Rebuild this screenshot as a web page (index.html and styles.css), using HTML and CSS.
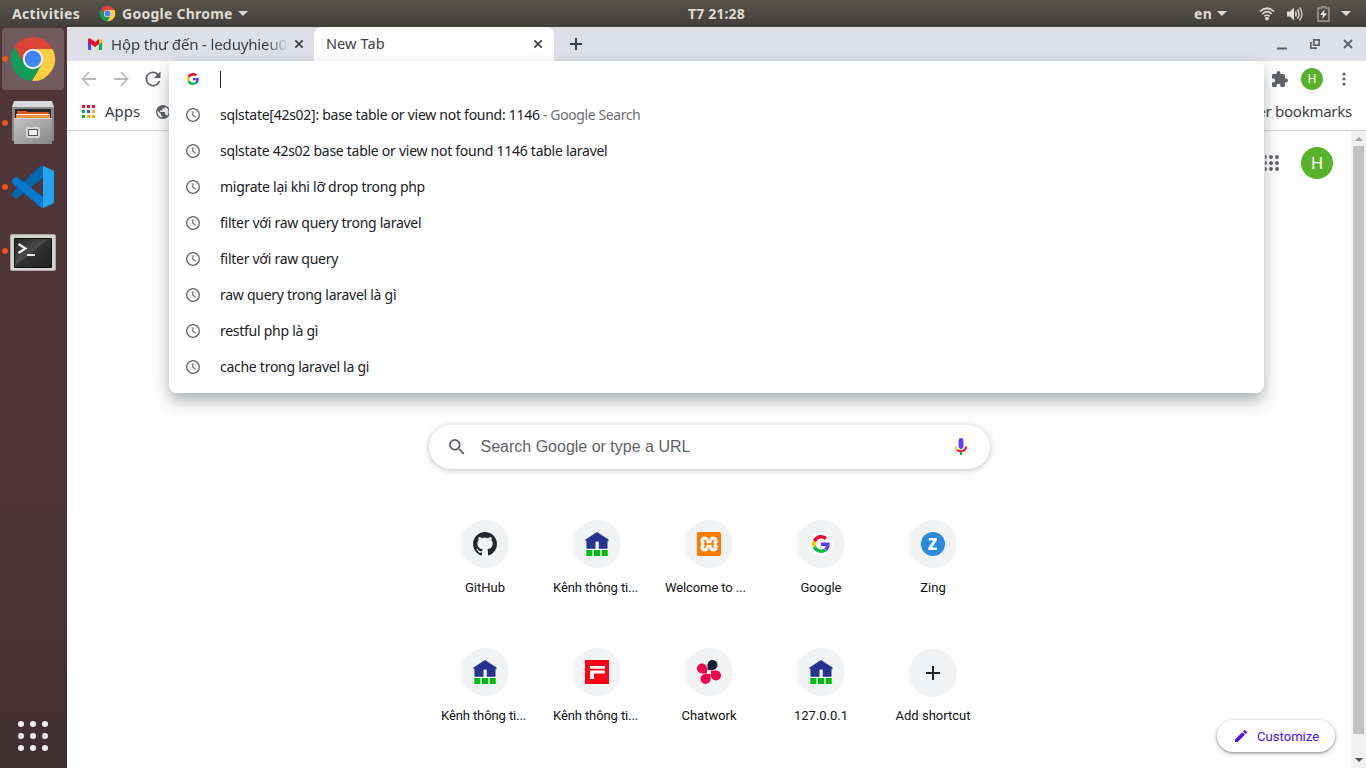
FILE: index.html
```html
<!DOCTYPE html>
<html lang="vi">
<head>
<meta charset="utf-8">
<title>New Tab</title>
<link rel="stylesheet" href="styles.css">
</head>
<body>
<svg class="defs" width="0" height="0">
  <symbol id="chrome" viewBox="0 0 48 48">
    <path fill="#db4437" d="M5.5 12A22 22 0 0 1 43.6 14H24L15.3 29Z"/>
    <path fill="#ffcd40" d="M43.6 14A22 22 0 0 1 22.9 46L32.7 29 24 14Z"/>
    <path fill="#0f9d58" d="M22.9 46A22 22 0 0 1 5.5 12L15.3 29H32.7Z"/>
    <circle cx="24" cy="24" r="10.2" fill="#f1f1f1"/><circle cx="24" cy="24" r="8.2" fill="#4285f4"/>
  </symbol>
  <symbol id="google" viewBox="0 0 48 48">
    <path fill="#f5002b" d="M24 9.5c3.54 0 6.71 1.22 9.21 3.6l6.85-6.85C35.9 2.38 30.47 0 24 0 14.62 0 6.51 5.38 2.56 13.22l7.98 6.19C12.43 13.72 17.74 9.5 24 9.5z"/>
    <path fill="#5a3fff" d="M46.98 24.55c0-1.57-.15-3.09-.38-4.55H24v9.02h12.94c-.58 2.96-2.26 5.48-4.78 7.18l7.73 6c4.51-4.18 7.09-10.36 7.09-17.65z"/>
    <path fill="#ffc400" d="M10.53 28.59c-.48-1.45-.76-2.99-.76-4.59s.27-3.14.76-4.59l-7.98-6.19C.92 16.46 0 20.12 0 24c0 3.88.92 7.54 2.56 10.78l7.97-6.19z"/>
    <path fill="#00bd45" d="M24 48c6.48 0 11.93-2.13 15.89-5.81l-7.73-6c-2.15 1.45-4.92 2.3-8.16 2.3-6.26 0-11.57-4.22-13.47-9.91l-7.98 6.19C6.51 42.62 14.62 48 24 48z"/>
  </symbol>
  <symbol id="clock" viewBox="0 0 14 14"><circle cx="7" cy="7" r="6.3" fill="none" stroke="#5f6368" stroke-width="1.3"/><path d="M6.8 3.3V7.3L9.7 9.1" fill="none" stroke="#5f6368" stroke-width="1.1"/></symbol>
  <symbol id="house" viewBox="0 0 24 24"><path fill="#27338f" d="M12 0 23.500 7.500v1.800h-1v7.400h-8.800V9.500h-3.200v7.200H1.500V9.300h-1V7.500Z"/><path fill="#00bb0c" d="M1.300 18h6v6h-6zM9 18h6v6H9zM16.700 18h6v6h-6z"/></symbol>
  <symbol id="close" viewBox="0 0 10 10"><path d="M1.300 1.300 8.700 8.700M8.700 1.300 1.300 8.700" stroke="#3c4043" stroke-width="1.700"/></symbol>
</svg>
<header class="topbar">
  <span class="activities">Activities</span>
  <svg class="menu-chrome"><use href="#chrome"/></svg>
  <span class="app-name">Google Chrome</span><i class="caret"></i>
  <span class="clock-text">T7 21:28</span>
  <div class="status">
    <span class="lang">en</span><i class="caret"></i>
    <svg class="wifi" width="16" height="14" viewBox="0 0 16 14" fill="none" stroke="#dfdbd2" stroke-width="1.7"><path d="M1 4.500Q8-2 15 4.500"/><path d="M3.200 7Q8 2.300 12.800 7" /><path d="M5.400 9.300Q8 6.700 10.600 9.300"/><circle cx="8" cy="11.600" r="1.900" fill="#dfdbd2" stroke="none"/></svg>
    <svg class="volume" width="17" height="16" viewBox="0 0 17 16" fill="none" stroke="#dfdbd2" stroke-width="1.500"><path d="M0 5.500h3L7 1.500v13l-4-4H0z" fill="#dfdbd2" stroke="none"/><path d="M8.500 5.500q1.500 2.500 0 5M10.500 3.500q3 4.500 0 9"/><path d="M12.500 1.500q5 6.500 0 13" stroke="#c5c2b9"/></svg>
    <svg class="battery" width="13" height="16" viewBox="0 0 13 16"><path d="M4.500 2V.8h4V2h3.400v13.200H1.100V2z" fill="none" stroke="#95928a" stroke-width="1.700"/><path d="M7.700 3.500 3 9h3l-.8 4L10 7.600H7z" fill="#eeeae2"/></svg>
    <i class="caret"></i>
  </div>
</header>
<div class="desktop">
  <nav class="dock">
    <div class="dock-item active"><i class="dot"></i><svg width="48" height="48"><use href="#chrome"/></svg></div>
    <div class="dock-item"><i class="dot"></i>
      <svg width="42" height="44" viewBox="0 0 42 44">
        <defs><linearGradient id="metal" x2="1" y2="1"><stop stop-color="#c6c6c6"/><stop offset="1" stop-color="#858585"/></linearGradient></defs>
        <path fill="#888" d="M0 5h42v35H0z"/><path fill="#d9d9d9" d="M2 0h38l2 6H0z"/><path fill="#252525" d="M3 8h36v10H3z"/>
        <path fill="#d65a17" d="M5 10h9l1 1h22v7H5z"/><path fill="#fff0d8" d="M4 13h34v1.300H4z"/><path fill="#ef9440" d="M4 14.300h34V18H4z"/>
        <path fill="url(#metal)" d="M2 17h38v26H2z"/><path fill="#d2d2d2" d="M2 17h38v1H2z"/>
        <rect x="14" y="26" width="14" height="11" rx="2" fill="#d8d8d8"/><rect x="16.500" y="28.500" width="9" height="6" fill="#eee" stroke="#555"/>
      </svg></div>
    <div class="dock-item"><i class="dot"></i>
      <svg width="42" height="42" viewBox="0 0 42 42"><path fill="#0069ad" d="M0 27 26 2Q28 0 31 0v12L5 32q-1 1-2 0L0 29Q-1 28 0 27z"/><path fill="#007acc" d="m0 14 3-3q1-1 2 0l26 20v11q-2 0-4-2L0 17q-1-1.500 0-3z"/><path fill="#23a5f1" d="m31 0 10 4.500q1 .5 1 2v29q0 1.500-1 2L31 42z"/></svg></div>
    <div class="dock-item terminal"><i class="dot"></i>
      <svg width="46" height="38" viewBox="0 0 46 38"><defs><linearGradient id="screen" x2="1" y2="1"><stop stop-color="#252525"/><stop offset=".45" stop-color="#4a4a4a"/><stop offset=".5" stop-color="#303030"/><stop offset="1" stop-color="#222"/></linearGradient></defs><rect x=".5" y=".5" width="45" height="36" rx="1.500" fill="#d4d4d2" stroke="#aaa"/><path fill="url(#screen)" stroke="#111" d="M4.500 4.500h37v29h-37z"/><path d="m8.500 10 7 4.500-7 4.500" fill="none" stroke="#eee" stroke-width="2.200"/><path d="M17 21h8" stroke="#eee" stroke-width="2"/></svg></div>
    <div class="app-grid"><i></i><i></i><i></i><i></i><i></i><i></i><i></i><i></i><i></i></div>
  </nav>
  <main class="browser">
    <div class="tabs">
      <div class="tab inactive">
        <svg width="14" height="12" viewBox="0 0 14 12"><path fill="#4c44f5" d="M0 3h3v9H1q-1 0-1-1z"/><path fill="#00b849" d="M11 3h3v8q0 1-1 1h-2z"/><path fill="#ffc600" d="M11 2q3-2 3 0v2l-3 2.500z"/><path fill="#ee0930" d="M0 2Q0-1 3 1l4 3 4-3v5L7 9 0 4z"/></svg>
        <span class="tab-title">Hộp thư đến - leduyhieu0</span>
        <svg class="tab-close" width="10" height="10"><use href="#close"/></svg>
      </div>
      <div class="tab-holder"><div class="tab current"><span class="new-title">New Tab</span><svg class="tab-close" width="10" height="10"><use href="#close"/></svg></div></div>
      <svg class="plus" width="12" height="12"><path d="M6 0v12M0 6h12" stroke="#3c4043" stroke-width="2"/></svg>
      <div class="window-buttons">
        <svg width="10" height="11"><path d="M0 9.500h10" stroke="#5f6368" stroke-width="2"/></svg>
        <svg width="10" height="10"><path d="M3.800.8h5.400v5.400H3.800zM.8 3v6.200H7" fill="none" stroke="#5f6368" stroke-width="1.800"/></svg>
        <svg width="10" height="10" viewBox="0 0 10 10"><path d="m1 1 8 8m0-8-8 8" stroke="#5f6368" stroke-width="1.900"/></svg>
      </div>
    </div>
    <div class="toolbar">
      <svg class="arrow" width="16" height="16" viewBox="0 0 16 16"><path d="M15 8H2M8 1 1.500 8 8 15" fill="none" stroke="#babcbe" stroke-width="1.800"/></svg>
      <svg class="arrow" width="16" height="16" viewBox="0 0 16 16"><path d="M1 8h13M8 1l6.500 7L8 15" fill="none" stroke="#babcbe" stroke-width="1.800"/></svg>
      <svg class="reload" width="16" height="16" viewBox="3.500 3.500 17 17"><path fill="#5f6368" d="M17.650 6.350A7.960 7.960 0 0 0 12 4a8 8 0 1 0 7.730 10h-2.080A6 6 0 1 1 12 6c1.660 0 3.140.69 4.220 1.780L13 11h7V4z"/></svg>
      <div class="toolbar-right">
        <svg width="16" height="16" viewBox="2 1 21 21"><path fill="#5f6368" d="M20.500 11H19V7a2 2 0 0 0-2-2h-4V3.500a2.500 2.500 0 0 0-5 0V5H4a2 2 0 0 0-2 2v3.800h1.500a2.700 2.700 0 0 1 0 5.400H2V20a2 2 0 0 0 2 2h3.800v-1.500a2.700 2.700 0 0 1 5.400 0V22H17a2 2 0 0 0 2-2v-4h1.500a2.500 2.500 0 0 0 0-5z"/></svg>
        <span class="avatar small">H</span>
        <svg width="4" height="14"><g fill="#5f6368"><circle cx="2" cy="2" r="1.600"/><circle cx="2" cy="7" r="1.600"/><circle cx="2" cy="12" r="1.600"/></g></svg>
      </div>
    </div>
    <div class="bookmarks">
      <svg width="14" height="14" shape-rendering="crispEdges"><path fill="#f00b35" d="M0 0h3v3H0zM5 0h3v3H5zM10 0h3v3h-3z"/><path fill="#00b347" d="M0 5h3v3H0zM0 10h3v3H0z"/><path fill="#5145ff" d="M5 5h3v3H5z"/><path fill="#f6ae00" d="M10 5h3v3h-3zM5 10h3v3H5zM10 10h3v3h-3z"/></svg>
      <span class="apps-label">Apps</span>
      <svg class="globe" width="14" height="14" viewBox="2 2 20 20"><path fill="#5f6368" d="M12 2a10 10 0 1 0 0 20 10 10 0 0 0 0-20zm-1 17.900A8 8 0 0 1 4.200 10.200L9 15v1a2 2 0 0 0 2 2zm6.900-2.500A2 2 0 0 0 16 16h-1v-3a1 1 0 0 0-1-1H8v-2h2a1 1 0 0 0 1-1V7h2a2 2 0 0 0 2-2v-.400a8 8 0 0 1 2.900 12.800z"/></svg>
      <span class="other">Other bookmarks</span>
    </div>
    <div class="page">
      <div class="ntp">
        <div class="account"><svg width="14" height="16" viewBox="0 0 14 16"><g fill="#5f6368"><circle cx="0" cy="2" r="1.900"/><circle cx="6" cy="2" r="1.900"/><circle cx="12" cy="2" r="1.900"/><circle cx="0" cy="8" r="1.900"/><circle cx="6" cy="8" r="1.900"/><circle cx="12" cy="8" r="1.900"/><circle cx="0" cy="14" r="1.900"/><circle cx="6" cy="14" r="1.900"/><circle cx="12" cy="14" r="1.900"/></g></svg><span class="avatar">H</span></div>
        <div class="search">
          <svg width="16" height="16" viewBox="3 3 18 18"><path fill="#5f6368" d="M15.500 14h-.79l-.28-.27A6.470 6.470 0 0 0 16 9.500 6.500 6.500 0 1 0 9.500 16c1.610 0 3.090-.59 4.230-1.570l.27.28v.79l5 4.990L20.490 19l-4.990-5zm-6 0C7.010 14 5 11.990 5 9.500S7.010 5 9.500 5 14 7.010 14 9.500 11.990 14 9.500 14z"/></svg>
          <span>Search Google or type a URL</span>
          <svg class="mic" width="12" height="18" viewBox="0 0 12 18" fill="none" stroke-width="1.900"><rect x="3.600" y="0" width="4.800" height="11" rx="2.400" fill="#5a3fff"/><path d="M.9 8.500q0 2.500 1.700 3.900" stroke="#ffc400"/><path d="M2.300 12.100Q6 15 9.500 12.100 11.100 10.500 11.100 8.500" stroke="#f5002b"/><path d="M6 14.200V17" stroke="#00b847"/></svg>
        </div>
        <div class="tiles">
          <div class="tile"><span class="disc"><svg width="24" height="24" viewBox="0 0 16 16"><path fill="#24292f" d="M8 0C3.580 0 0 3.580 0 8c0 3.540 2.290 6.530 5.470 7.590.4.070.55-.17.55-.38 0-.19-.01-.82-.01-1.490-2.010.37-2.530-.49-2.690-.94-.09-.23-.48-.94-.82-1.130-.28-.15-.68-.52-.01-.53.63-.01 1.080.58 1.230.82.72 1.210 1.870.87 2.330.66.07-.52.28-.87.51-1.070-1.780-.2-3.640-.89-3.640-3.950 0-.87.31-1.590.82-2.150-.08-.2-.36-1.020.08-2.120 0 0 .67-.21 2.200.82.64-.18 1.320-.27 2-.27s1.360.09 2 .27c1.530-1.040 2.200-.82 2.200-.82.44 1.100.16 1.920.08 2.120.51.56.82 1.270.82 2.150 0 3.070-1.870 3.750-3.650 3.950.29.25.54.73.54 1.480 0 1.070-.01 1.930-.01 2.200 0 .21.15.46.55.38A8.010 8.010 0 0 0 16 8c0-4.420-3.580-8-8-8z"/></svg></span><span class="label">GitHub</span></div>
          <div class="tile"><span class="disc"><svg width="24" height="24"><use href="#house"/></svg></span><span class="label long">Kênh thông ti...</span></div>
          <div class="tile"><span class="disc"><svg width="24" height="24"><rect width="24" height="24" rx="2" fill="#ff7800"/><g fill="#fff"><circle cx="7.600" cy="8.800" r="4.300"/><circle cx="16.400" cy="8.800" r="4.300"/><circle cx="7.600" cy="15.200" r="4.300"/><circle cx="16.400" cy="15.200" r="4.300"/><path d="M7 8.500h10v7H7z"/></g><path fill="none" stroke="#ff7800" stroke-width="1.700" stroke-linecap="round" d="M7.300 8.600q1.400 0 1.400 1.800T7 12q1.700 0 1.700 1.600t-1.400 1.800M16.700 8.600q-1.400 0-1.400 1.800T17 12q-1.700 0-1.700 1.600t1.400 1.800M9 12h6"/></svg></span><span class="label long">Welcome to ...</span></div>
          <div class="tile"><span class="disc"><span class="white-disc"><svg width="18" height="18"><use href="#google"/></svg></span></span><span class="label">Google</span></div>
          <div class="tile"><span class="disc"><svg width="24" height="24"><circle cx="12" cy="12" r="12" fill="#298be0"/><path d="M7.800 6H16v2.300l-5 7.200h5V18H7.300v-2.400l5.200-7.100H7.800z" fill="#fff"/></svg></span><span class="label">Zing</span></div>
          <div class="tile"><span class="disc"><svg width="24" height="24"><use href="#house"/></svg></span><span class="label long">Kênh thông ti...</span></div>
          <div class="tile"><span class="disc"><svg width="24" height="24"><path fill="#ff0014" d="M0 0h24v24H0z"/><path fill="#fff" d="M5 6h15v2.700H5zM5 10.500h15v3H9V19H5z"/></svg></span><span class="label long">Kênh thông ti...</span></div>
          <div class="tile"><span class="disc"><svg width="24" height="24"><path fill="#141c32" d="M10.500 10V5a5 5 0 1 1 5 5z"/><path fill="#f80050" d="M10 13.500H5A5 5 0 1 1 10 8.500zM13.500 14v5a5 5 0 1 1-5-5zM14 10.500h5a5 5 0 1 1-5 5z"/></svg></span><span class="label">Chatwork</span></div>
          <div class="tile"><span class="disc"><svg width="24" height="24"><use href="#house"/></svg></span><span class="label">127.0.0.1</span></div>
          <div class="tile add"><span class="disc"><svg width="14" height="14"><path d="M7 0v14M0 7h14" stroke="#202124" stroke-width="2"/></svg></span><span class="label">Add shortcut</span></div>
        </div>
        <div class="customize"><svg width="12" height="12" viewBox="3 3 18 18"><path fill="#4a10ed" d="M3 17.250V21h3.750L17.810 9.940l-3.750-3.750zM20.710 7.040a1 1 0 0 0 0-1.410l-2.340-2.340a1 1 0 0 0-1.410 0l-1.830 1.830 3.750 3.750z"/></svg><span>Customize</span></div>
      </div>
      <div class="scrollbar"><i class="up"></i><b></b><i class="down"></i></div>
    </div>
    <div class="omnibox">
      <div class="row input"><svg width="12" height="12"><use href="#google"/></svg><i class="cursor"></i></div>
      <div class="row"><svg width="14" height="14"><use href="#clock"/></svg><span>sqlstate[42s02]: base table or view not found: 1146<em> - Google Search</em></span></div>
      <div class="row"><svg width="14" height="14"><use href="#clock"/></svg><span>sqlstate 42s02 base table or view not found 1146 table laravel</span></div>
      <div class="row"><svg width="14" height="14"><use href="#clock"/></svg><span>migrate lại khi lỡ drop trong php</span></div>
      <div class="row"><svg width="14" height="14"><use href="#clock"/></svg><span>filter với raw query trong laravel</span></div>
      <div class="row"><svg width="14" height="14"><use href="#clock"/></svg><span>filter với raw query</span></div>
      <div class="row"><svg width="14" height="14"><use href="#clock"/></svg><span>raw query trong laravel là gì</span></div>
      <div class="row"><svg width="14" height="14"><use href="#clock"/></svg><span>restful php là gì</span></div>
      <div class="row"><svg width="14" height="14"><use href="#clock"/></svg><span>cache trong laravel la gi</span></div>
    </div>
  </main>
</div>
</body>
</html>
```
FILE: styles.css
```css
* { box-sizing: border-box; }
body { margin: 0; width: 1366px; height: 768px; overflow: hidden; background: #fff; font-family: "Noto Sans", "Open Sans", sans-serif; color: #3c4043; white-space: nowrap; }
svg { display: block; flex: none; }
.defs { position: absolute; }
.topbar { height: 27px; display: flex; align-items: center; padding-left: 12px; background: linear-gradient(#57544b, #403f3a); color: #dfdbd2; font-size: 14px; font-weight: 700; position: relative; }
.activities { width: 87px; letter-spacing: 0.3px; }
.menu-chrome { width: 17px; height: 17px; margin-right: 6px; }
.app-name { width: 112px; letter-spacing: 0.25px; }
.caret { border: 5px solid transparent; border-top-color: #dfdbd2; border-bottom: 0; margin-left: 4px; flex: none; }
.clock-text { position: absolute; left: 688px; letter-spacing: 0.15px; }
.status { margin-left: auto; display: flex; align-items: center; padding-right: 15px; }
.lang { width: 19px; letter-spacing: .4px; }
.wifi { margin-left: 32px; }
.volume { margin-left: 12px; }
.battery { margin-left: 13px; margin-right: 7px; }
.desktop { display: flex; height: 741px; }
.dock { width: 67px; padding: 1px 2px 0; display: flex; flex-direction: column; gap: 2px; background: linear-gradient(#503639, #4d3539 55%, #452f35 90%, #3e3033); }
.dock-item { width: 62px; height: 62px; border-radius: 4px; position: relative; display: flex; align-items: center; justify-content: center; }
.dock-item.active { background: #715b5e; }
.terminal { padding-top: 4px; }
.dot { position: absolute; left: 0; top: 28px; width: 6px; height: 6px; border-radius: 50%; background: #e95420; }
.app-grid { margin: auto 0 17px 16px; display: grid; grid-template-columns: repeat(3, 6px); gap: 6px; }
.app-grid i { width: 6px; height: 6px; border-radius: 50%; background: #f0eeee; }
.browser { flex: 1; position: relative; display: flex; flex-direction: column; }
.tabs { height: 34px; background: #dee0e6; display: flex; align-items: center; }
.tab { height: 34px; display: flex; align-items: center; font-size: 15px; }
.inactive { width: 247px; padding-left: 21px; padding-right: 10px; }
.tab-title { width: 179px; margin-left: 9px; letter-spacing: -0.15px; line-height: 20px; padding-bottom: 1px; -webkit-mask-image: linear-gradient(90deg, #000 155px, transparent 178px); mask-image: linear-gradient(90deg, #000 155px, transparent 178px); }
.tab-close { margin-left: auto; }
.current { width: 240px; background: #fff; border-radius: 8px 8px 0 0; padding: 0 11px 0 12px; }
.new-title { font-size: 14.500px; letter-spacing: .1px; padding-bottom: 2px; }
.plus { margin-left: 16px; }
.window-buttons { margin-left: auto; display: flex; gap: 23px; align-items: center; padding-right: 13px; }
.toolbar { height: 36px; display: flex; align-items: center; padding-left: 14px; }
.arrow { margin-right: 16px; }
.toolbar-right { margin-left: auto; display: flex; align-items: center; padding-right: 20px; gap: 13px; }
.toolbar-right svg:last-child { margin-left: 6px; }
.avatar { display: flex; align-items: center; justify-content: center; width: 32px; height: 32px; border-radius: 50%; color: #fff; background: #58b32b; font: 17px Roboto, sans-serif; }
.avatar.small { width: 22px; height: 22px; font-size: 12px; }
.bookmarks { height: 34px; border-bottom: 1px solid #d5d6dc; display: flex; align-items: center; padding: 0 14px 4px 15px; font-size: 15px; }
.bookmarks span { padding-bottom: 2px; }
.apps-label { margin-left: 9px; width: 51px; }
.other { margin-left: auto; letter-spacing: -0.25px; }
.page { height: 637px; display: flex; }
.ntp { width: 1284px; display: flex; flex-direction: column; align-items: center; }
.account { align-self: flex-end; display: flex; align-items: center; gap: 22px; margin: 16px 18px 0 0; }
.search { width: 561px; height: 44px; flex: none; margin: 246px 0 0 1px; border-radius: 22px; box-shadow: 0 1px 6px rgba(32,33,36,.28); display: flex; align-items: center; padding: 0 23px 0 20px; font: 16px "Liberation Sans", Arial, sans-serif; color: #5f6368; }
.search span { margin-left: 15.500px; }
.mic { margin-left: auto; }
.tiles { width: 560px; margin-top: 35px; display: grid; grid-template-columns: repeat(5, 112px); row-gap: 16px; }
.tile { height: 112px; padding-top: 16px; display: flex; flex-direction: column; align-items: center; }
.tile .disc { width: 48px; height: 48px; flex: none; border-radius: 50%; background: #f1f3f4; display: flex; align-items: center; justify-content: center; }
.label { margin-top: 10px; font: 13px/20px Roboto, sans-serif; color: #111214; }
.long { width: 88px; letter-spacing: -0.1px; }
.add { padding-top: 17px; }
.add .label { margin-top: 9px; }
.white-disc { width: 24px; height: 24px; border-radius: 50%; background: #fff; display: flex; align-items: center; justify-content: center; }
.customize { align-self: flex-end; width: 118px; height: 32px; margin: -24px 16px 0 0; border-radius: 16px; background: #fff; box-shadow: 0 1px 3px rgba(0,0,0,.4), 0 2px 6px rgba(0,0,0,.13); display: flex; align-items: center; padding-left: 18px; gap: 10px; font: 13px Roboto, sans-serif; color: #4a10ed; letter-spacing: .05px; }
.scrollbar { width: 15px; background: #f1f1f1; display: flex; flex-direction: column; align-items: center; }
.scrollbar b { width: 11px; height: 588px; background: #c1c1c1; }
.up { border: 4px solid transparent; border-top: 0; border-bottom-color: #a3a3a3; margin: 6px 0 5px; }
.down { border: 4px solid transparent; border-bottom: 0; border-top-color: #505050; margin-top: 24px; }
.omnibox { position: absolute; left: 102px; top: 34px; width: 1095px; height: 332px; border-radius: 8px; background: #fff; box-shadow: 0 8px 16px rgba(32,40,45,.36); }
.row { height: 36px; display: flex; align-items: center; padding-left: 17px; font-size: 14px; color: #202124; }
.row span { margin-left: 20px; letter-spacing: -0.27px; padding-bottom: 2px; }
.row em { font-style: normal; color: #6d7075; letter-spacing: -0.4px; }
.input { padding-left: 18px; }
.cursor { width: 1px; height: 17px; margin-left: 21px; background: #202124; }
```
